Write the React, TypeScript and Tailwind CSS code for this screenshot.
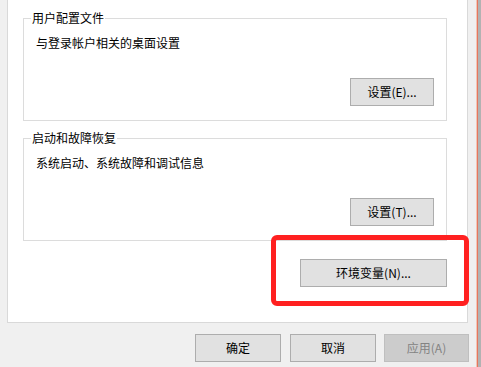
import React from "react";

const font = { fontFamily: '"Noto Sans CJK SC", "Microsoft YaHei", sans-serif' };

function Btn({ children, className = "" }: { children: React.ReactNode; className?: string }) {
  return (
    <div
      className={`h-[28px] flex items-center justify-center border border-[#adadad] bg-[#e1e1e1] text-[12px] leading-[16px] text-black ${className}`}
    >
      {children}
    </div>
  );
}

function Group({ title, text, button }: { title: string; text: string; button: string }) {
  return (
    <fieldset className="w-[424px] border border-[#dcdcdc] pb-[14px]">
      <legend className="ml-[7px] px-[1px] text-[12px] leading-[16px] text-black">{title}</legend>
      <div className="mt-[9px] ml-[12px] text-[12px] leading-[16px] text-black">{text}</div>
      <div className="mt-[27px] flex justify-end pr-[12px]">
        <Btn className="w-[84px]">{button}</Btn>
      </div>
    </fieldset>
  );
}

export default function App() {
  return (
    <div className="relative w-[481px] h-[367px] overflow-hidden bg-[#f0f0f0] flex" style={font}>
      <div className="w-[476px] flex flex-col">
        <div className="ml-[7px] w-[461px] h-[323px] bg-white border-l border-r border-b border-[#d9d9d9] pl-[15px] pt-[10px] flex flex-col">
          <Group title="用户配置文件" text="与登录帐户相关的桌面设置" button="设置(E)..." />
          <div className="mt-[9px]">
            <Group title="启动和故障恢复" text="系统启动、系统故障和调试信息" button="设置(T)..." />
          </div>
          <div className="mt-[18px] flex justify-end pr-[20px]">
            <Btn className="w-[147px]">环境变量(N)...</Btn>
          </div>
        </div>
        <div className="mt-[11px] flex">
          <Btn className="ml-[195px] w-[86px]">确定</Btn>
          <Btn className="ml-[9px] w-[86px]">取消</Btn>
          <div className="ml-[8px] w-[85px] h-[28px] flex items-center justify-center border border-[#bfbfbf] bg-[#cccccc] text-[12px] leading-[16px] text-[#838383]">
            应用(A)
          </div>
        </div>
      </div>
      <div className="w-[1px] h-full bg-[#f3c4b6]" />
      <div className="w-[1px] h-full bg-[#e6775e]" />
      <div className="w-[3px] h-full bg-[#b2b2b2]" />
      <div className="absolute left-[271px] top-[235px] w-[198px] h-[71px] border-[5px] border-[#ff2020] rounded-[6px]" />
    </div>
  );
}
